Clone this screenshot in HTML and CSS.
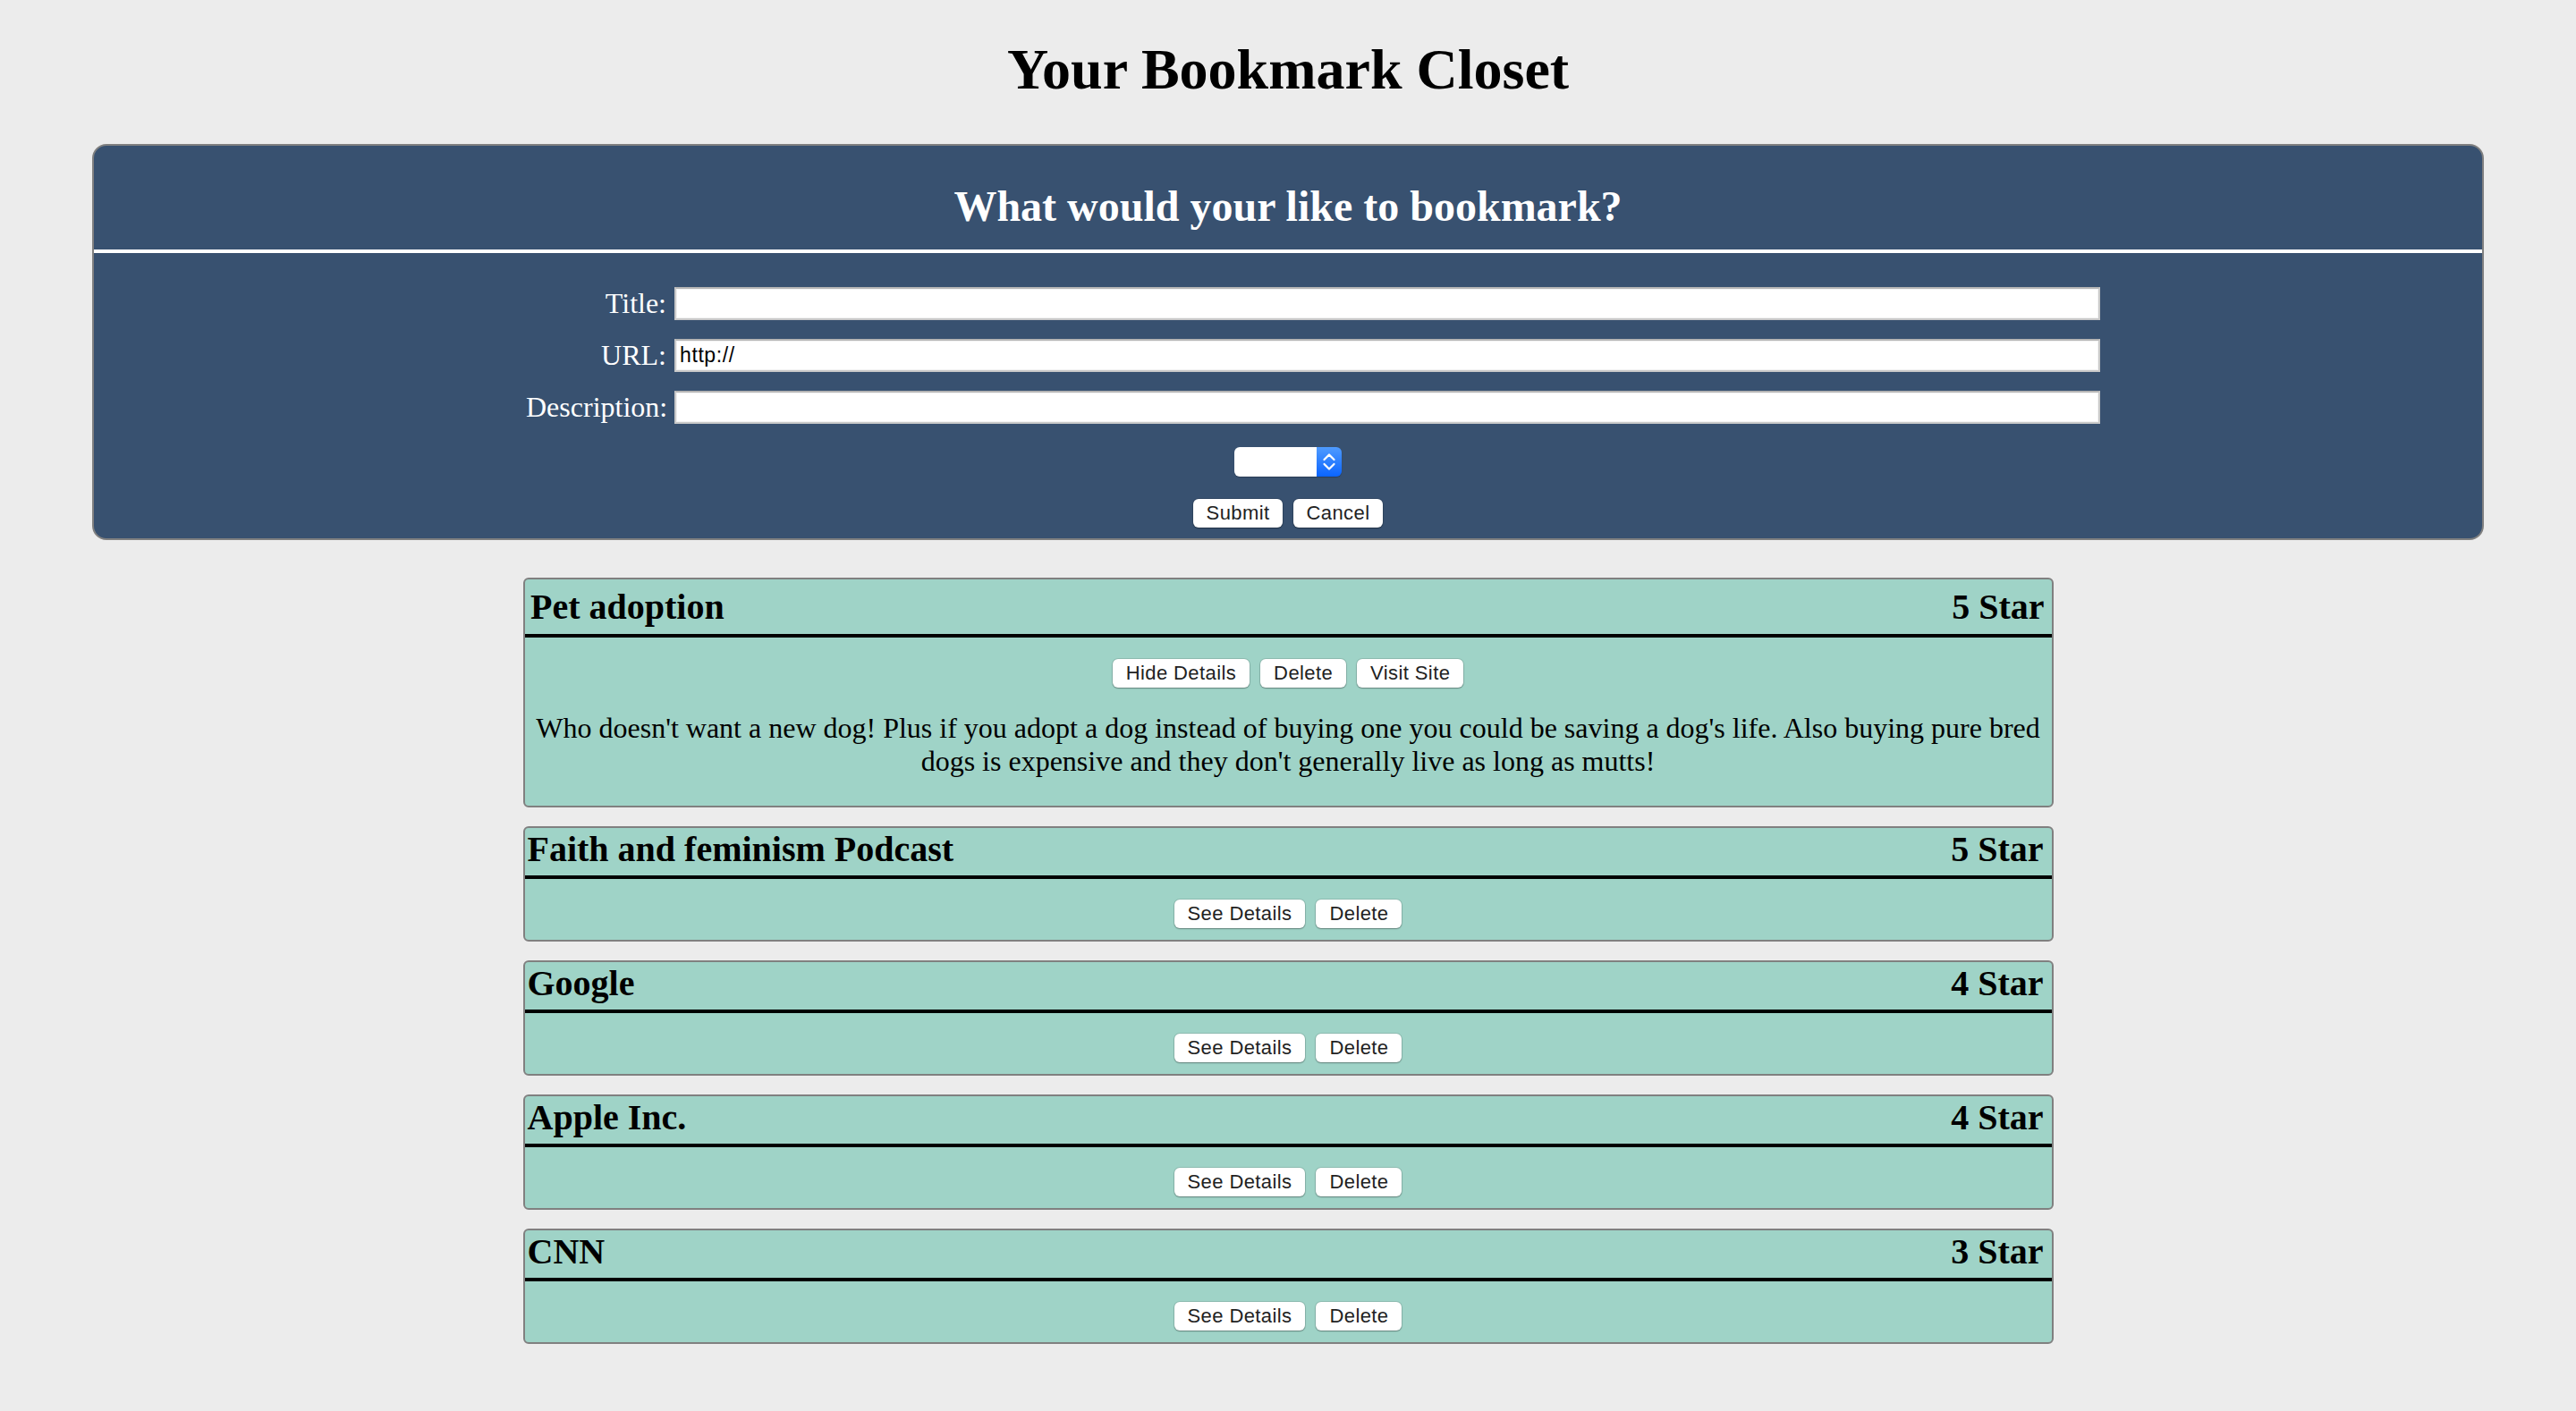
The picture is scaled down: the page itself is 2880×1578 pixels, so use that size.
FILE: index.html
```html
<!DOCTYPE html>
<html lang="en">
<head>
<meta charset="utf-8">
<title>Your Bookmark Closet</title>
<link rel="stylesheet" href="styles.css">
</head>
<body>
<h1 class="page-title">Your Bookmark Closet</h1>

<section class="add-panel">
  <h2 class="add-head">What would your like to bookmark?</h2>
  <form class="add-form">
    <div class="fields">
      <label class="field-label" for="f-title">Title:</label>
      <input class="field-input" id="f-title" type="text">
      <label class="field-label" for="f-url">URL:</label>
      <input class="field-input" id="f-url" type="text" value="http://">
      <label class="field-label" for="f-desc">Description:</label>
      <input class="field-input" id="f-desc" type="text">
    </div>
    <div class="select-row">
      <div class="select">
        <span class="select-field"></span>
        <span class="select-arrow">
          <svg viewBox="0 0 28 33" width="28" height="33" aria-hidden="true">
            <path d="M8.5 14 L14 8.5 L19.5 14" fill="none" stroke="#fff" stroke-width="2.2" stroke-linecap="round" stroke-linejoin="round"/>
            <path d="M8.5 19 L14 24.5 L19.5 19" fill="none" stroke="#fff" stroke-width="2.2" stroke-linecap="round" stroke-linejoin="round"/>
          </svg>
        </span>
      </div>
    </div>
    <div class="btn-row">
      <button class="btn" type="button">Submit</button>
      <button class="btn" type="button">Cancel</button>
    </div>
  </form>
</section>

<main class="list">
  <article class="card open">
    <header class="card-head"><h3 class="card-title">Pet adoption</h3><span class="card-stars">5 Star</span></header>
    <div class="card-body">
      <div class="actions">
        <button class="btn" type="button">Hide Details</button>
        <button class="btn" type="button">Delete</button>
        <button class="btn" type="button">Visit Site</button>
      </div>
      <p class="desc">Who doesn't want a new dog! Plus if you adopt a dog instead of buying one you could be saving a dog's life. Also buying pure bred dogs is expensive and they don't generally live as long as mutts!</p>
    </div>
  </article>

  <article class="card">
    <header class="card-head"><h3 class="card-title">Faith and feminism Podcast</h3><span class="card-stars">5 Star</span></header>
    <div class="card-body">
      <div class="actions">
        <button class="btn" type="button">See Details</button>
        <button class="btn" type="button">Delete</button>
      </div>
    </div>
  </article>

  <article class="card">
    <header class="card-head"><h3 class="card-title">Google</h3><span class="card-stars">4 Star</span></header>
    <div class="card-body">
      <div class="actions">
        <button class="btn" type="button">See Details</button>
        <button class="btn" type="button">Delete</button>
      </div>
    </div>
  </article>

  <article class="card">
    <header class="card-head"><h3 class="card-title">Apple Inc.</h3><span class="card-stars">4 Star</span></header>
    <div class="card-body">
      <div class="actions">
        <button class="btn" type="button">See Details</button>
        <button class="btn" type="button">Delete</button>
      </div>
    </div>
  </article>

  <article class="card">
    <header class="card-head"><h3 class="card-title">CNN</h3><span class="card-stars">3 Star</span></header>
    <div class="card-body">
      <div class="actions">
        <button class="btn" type="button">See Details</button>
        <button class="btn" type="button">Delete</button>
      </div>
    </div>
  </article>
</main>
</body>
</html>
```

FILE: styles.css
```css
* { box-sizing: border-box; }

body {
  margin: 0;
  background: #ececec;
  color: #000;
  font-family: "Liberation Serif", "Times New Roman", serif;
}

.page-title {
  margin: 41px 0 46px;
  font-size: 64px;
  line-height: 74px;
  font-weight: bold;
  text-align: center;
}

.add-panel {
  margin: 0 103px;
  background: #385170;
  border: 2px solid #808080;
  border-radius: 16px;
  color: #fff;
  padding-bottom: 12px;
}

.add-head {
  margin: 0;
  padding: 40px 0 21px;
  border-bottom: 4px solid #fff;
  font-size: 48px;
  line-height: 55px;
  font-weight: bold;
  text-align: center;
}

.fields {
  display: grid;
  grid-template-columns: 157px 1594px;
  grid-auto-rows: 37px;
  column-gap: 9px;
  row-gap: 21px;
  justify-content: center;
  align-items: center;
  padding-left: 56px;
  margin-top: 38px;
}

.field-label {
  font-size: 32px;
  line-height: 37px;
  text-align: right;
  white-space: nowrap;
}

.field-input {
  height: 37px;
  width: 100%;
  margin: 0;
  background: #fff;
  border: 2px solid #c9c9c9;
  border-top-color: #b5b5b5;
  outline: 1px solid #f2f2f2;
  outline-offset: -3px;
  padding: 0 4px;
  font-family: "Liberation Sans", Arial, sans-serif;
  font-size: 23px;
  letter-spacing: 0.6px;
  color: #000;
}

.select-row {
  display: flex;
  justify-content: center;
  margin-top: 26px;
}

.select {
  display: flex;
  width: 120px;
  height: 33px;
  border-radius: 6px;
  overflow: hidden;
  box-shadow: 0 1px 1px rgba(0, 0, 0, 0.25);
}

.select-field {
  flex: 1;
  background: #fff;
}

.select-arrow {
  width: 28px;
  display: flex;
  background: linear-gradient(#4f9bff, #0a64ff);
}

.btn-row {
  display: flex;
  justify-content: center;
  gap: 12px;
  margin-top: 25px;
}

.btn {
  height: 32px;
  margin: 0;
  padding: 0 15px;
  background: #fff;
  border: none;
  border-radius: 6px;
  box-shadow: 0 0 0 1px rgba(0, 0, 0, 0.1), 0 1px 1.5px rgba(0, 0, 0, 0.3);
  font-family: "Liberation Sans", Arial, sans-serif;
  font-size: 22px;
  letter-spacing: 0.4px;
  color: #222;
}

.btn-row .btn {
  width: 100px;
  padding: 0;
}

.list {
  display: flex;
  flex-direction: column;
  align-items: center;
  gap: 21px;
  margin-top: 42px;
  padding-bottom: 60px;
}

.card {
  width: 1711px;
  background: #9fd3c7;
  border: 2px solid #808080;
  border-radius: 6px;
}

.card-head {
  display: flex;
  justify-content: space-between;
  align-items: baseline;
  padding: 1.5px 9px 5.5px 3px;
  border-bottom: 4px solid #000;
  font-size: 40px;
  line-height: 46px;
  font-weight: bold;
}

.card.open .card-head {
  padding: 7.5px 8px 7.5px 6.5px;
}

.card-title {
  margin: 0;
  font-size: inherit;
  line-height: inherit;
}

.card-body {
  padding: 23px 0 13px;
}

.card.open .card-body {
  padding: 24px 0 31px;
}

.actions {
  display: flex;
  justify-content: center;
  gap: 12px;
}

.desc {
  margin: 27px 12px 0;
  font-size: 32px;
  line-height: 36.8px;
  text-align: center;
}
```
